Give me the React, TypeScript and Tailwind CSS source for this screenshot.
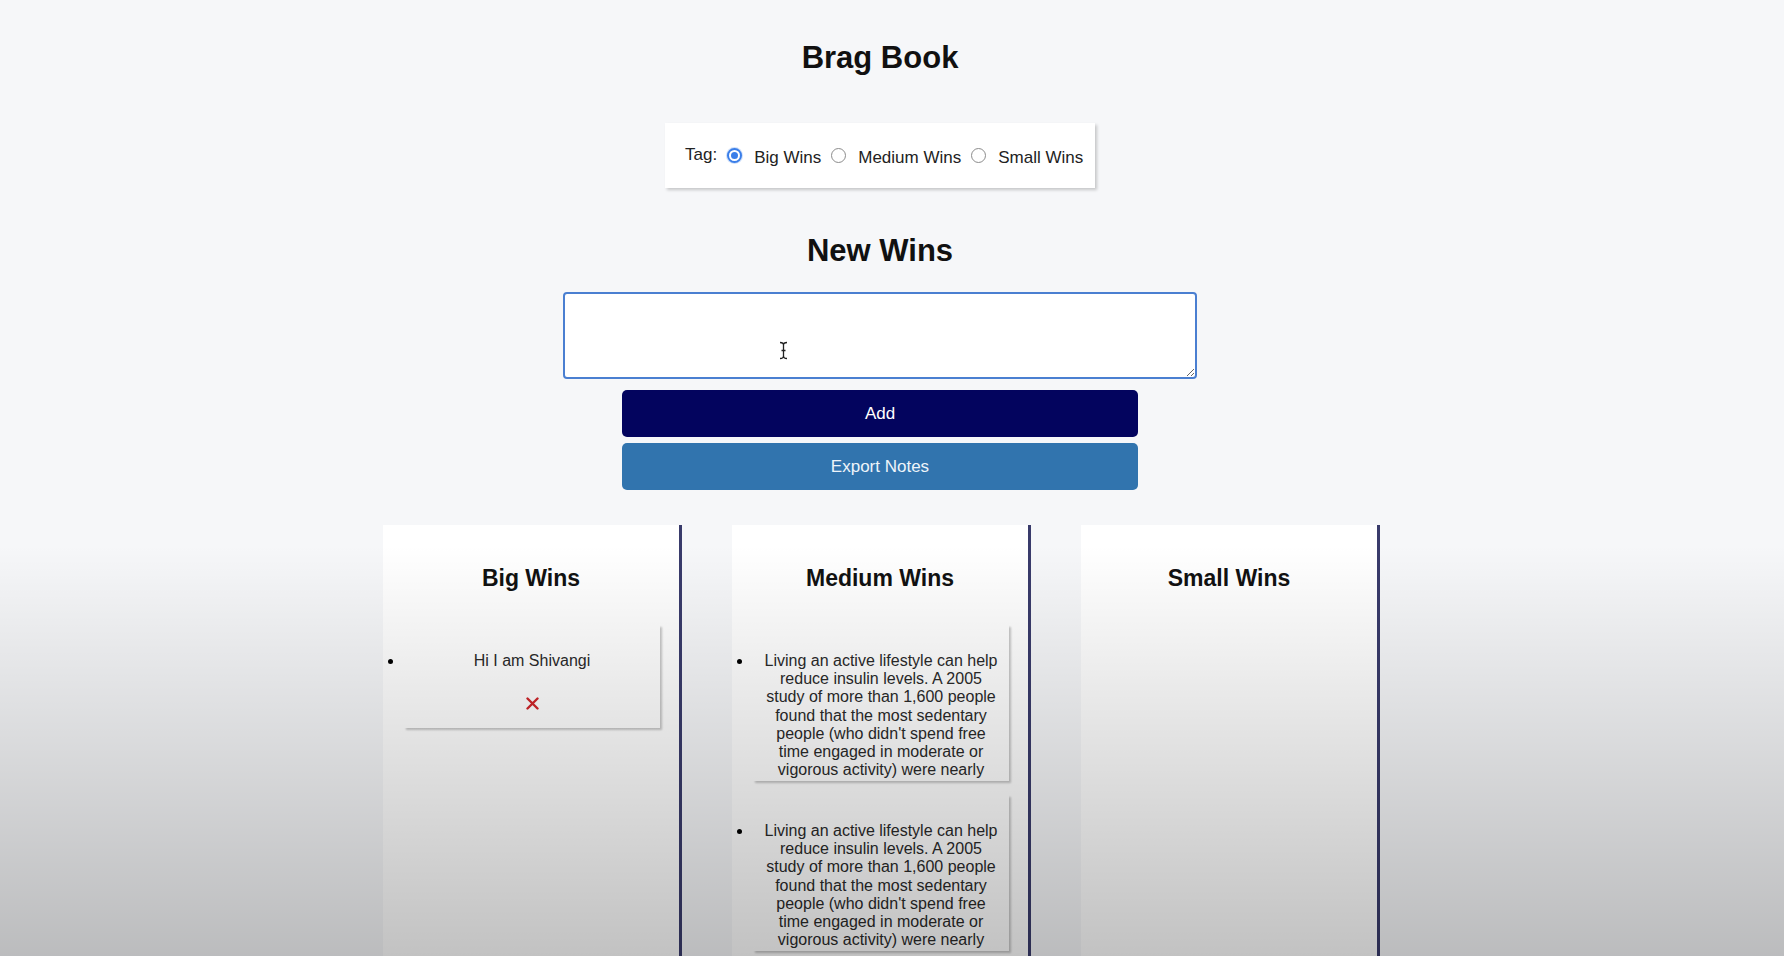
import React from "react";

const longText =
  "Living an active lifestyle can help reduce insulin levels. A 2005 study of more than 1,600 people found that the most sedentary people (who didn't spend free time engaged in moderate or vigorous activity) were nearly twice as likely to have metabolic syndrome as those who did 150 minutes or more of moderate activity per week.";

function XIcon() {
  return (
    <svg width="13" height="13" viewBox="0 0 13 13" className="block">
      <path d="M1.5 1.5 L11.5 11.5 M11.5 1.5 L1.5 11.5" stroke="#d0262a" strokeWidth="2.4" strokeLinecap="round" />
    </svg>
  );
}

function Radio({ checked, label }: { checked?: boolean; label: string }) {
  return (
    <label className="flex items-center">
      {checked ? (
        <span className="flex h-[15px] w-[15px] items-center justify-center rounded-full border-[2px] border-[#3a7ee9] bg-white shadow-[0_0_0_1px_rgba(58,126,233,0.25)]">
          <span className="h-[7px] w-[7px] rounded-full bg-[#3a7ee9]" />
        </span>
      ) : (
        <span className="h-[15px] w-[15px] rounded-full border border-[#8c8c8c] bg-white" />
      )}
      <span className="ml-[12px] mt-[4px] text-[17px] text-[#222]">{label}</span>
    </label>
  );
}

function Card({ text, clip, remove }: { text: string; clip?: boolean; remove?: boolean }) {
  return (
    <li className="list-item">
      <div
        className={
          "bg-white/60 px-[10px] pt-[27px] text-center text-[16px] leading-[18.2px] text-[#2a2a2a] shadow-[2px_2px_2px_rgba(0,0,0,0.22)] " +
          (clip ? "max-h-[156px] overflow-hidden" : "pb-[18px]")
        }
      >
        <p>{text}</p>
        {remove && (
          <button className="mx-auto mt-[26px] flex h-[14px] w-[16px] items-center justify-center">
            <XIcon />
          </button>
        )}
      </div>
    </li>
  );
}

function Column({ title, children }: { title: string; children?: React.ReactNode }) {
  return (
    <div className="w-[299px] border-r-[3px] border-[#393b6b] bg-white pt-[40px]">
      <h2 className="text-center text-[23px] font-bold leading-[27px] text-[#111]">{title}</h2>
      <ul className="mt-[33px] flex list-disc flex-col gap-[14px] pl-[21px] pr-[19px]">{children}</ul>
    </div>
  );
}

export default function App() {
  return (
    <div
      className="relative h-[956px] overflow-hidden bg-[#f6f7f9] pr-[24px]"
      style={{ fontFamily: '"Liberation Sans", Arial, sans-serif' }}
    >
      <div className="flex flex-col items-center">
        <h1 className="mt-[40px] text-[31px] font-bold leading-[36px] text-[#111]">Brag Book</h1>

        <div className="mt-[47px] flex h-[65px] w-[430px] items-center bg-white pl-[20px] shadow-[2px_2px_3px_rgba(0,0,0,0.2)]">
          <span className="mb-[2px] mr-[10px] text-[17px] text-[#222]">Tag:</span>
          <div className="flex items-center gap-[10px]">
            <Radio checked label="Big Wins" />
            <Radio label="Medium Wins" />
            <Radio label="Small Wins" />
          </div>
        </div>

        <h2 className="mt-[45px] text-[31px] font-bold leading-[36px] text-[#111]">New Wins</h2>

        <div className="relative mt-[23px]">
          <textarea className="block h-[87px] w-[634px] rounded-[4px] border-[2px] border-[#4a7fd1] bg-white outline-none" />
          <svg
            className="pointer-events-none absolute left-[216px] top-[49px]"
            width="9"
            height="19"
            viewBox="0 0 9 19"
          >
            <path d="M1 1.5 Q4.5 1.5 4.5 4 L4.5 15 Q4.5 17.5 1 17.5 M8 1.5 Q4.5 1.5 4.5 4 M4.5 15 Q4.5 17.5 8 17.5 M2.5 9.5 L6.5 9.5" stroke="#222" strokeWidth="1.3" fill="none" />
          </svg>
        </div>

        <button className="mt-[11px] h-[47px] w-[516px] rounded-[5px] bg-[#03045e] text-[17px] text-white">Add</button>
        <button className="mt-[6px] h-[47px] w-[516px] rounded-[5px] bg-[#3174ae] text-[17px] text-[#eef4fa]">
          Export Notes
        </button>

        <div className="ml-[3px] mt-[35px] flex gap-[50px]">
          <Column title="Big Wins">
            <Card text="Hi I am Shivangi" remove />
          </Column>
          <Column title="Medium Wins">
            <Card text={longText} clip remove />
            <Card text={longText} clip remove />
            <Card text={longText} clip remove />
          </Column>
          <Column title="Small Wins" />
        </div>
      </div>

      <div className="pointer-events-none absolute inset-0 bg-[linear-gradient(to_bottom,rgba(0,0,0,0)_0%,rgba(0,0,0,0)_57%,rgba(0,0,0,0.24)_100%)]" />
    </div>
  );
}
